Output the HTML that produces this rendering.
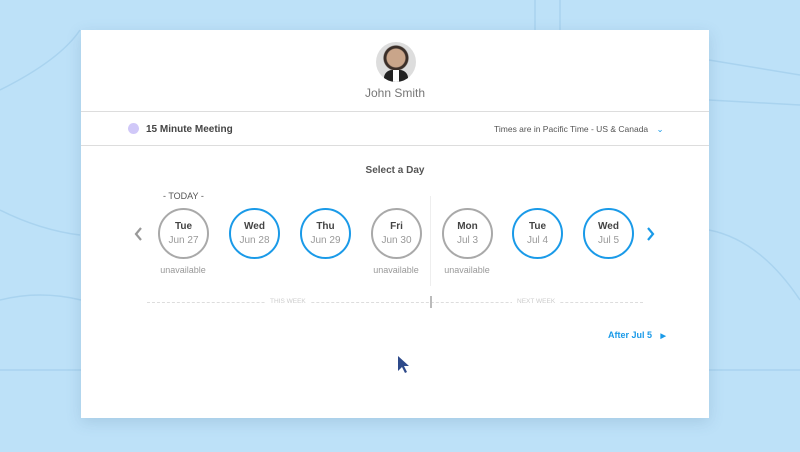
<!DOCTYPE html>
<html><head><style>
body{margin:0;width:800px;height:452px;background:#bde1f8;position:relative;overflow:hidden;font-family:"Liberation Sans",sans-serif}
.card{position:absolute;left:81px;top:30px;width:628px;height:388px;background:#fff;box-shadow:0 4px 14px rgba(60,100,140,.18)}
.abs{position:absolute}
.c{position:absolute;width:47px;height:47px;border-radius:50%;border:2px solid #a9a9a9;top:208px;text-align:center;box-sizing:content-box}
.c.b{border-color:#1a9ae8}
.c .d{font-size:10px;color:#444;font-weight:bold;margin-top:11px}
.c .m{font-size:10px;color:#999;margin-top:3px}
.u{position:absolute;top:265px;font-size:9px;color:#999;width:80px;text-align:center}
</style></head><body>
<svg class="abs" style="left:0;top:0" width="800" height="452">
<g fill="none" stroke="#a9d3ef" stroke-width="1.5">
<path d="M0 90 Q60 60 80 30"/><path d="M0 210 Q40 230 80 235"/>
<path d="M535 0 V30"/><path d="M560 0 V30"/><path d="M709 60 L800 75"/><path d="M709 100 L800 105"/>
<path d="M709 230 Q760 240 800 300"/><path d="M0 370 H81"/><path d="M709 370 H800"/><path d="M0 300 Q40 290 81 300"/>
</g></svg>
<div class="card">
<div class="abs" style="left:295px;top:12px;width:40px;height:40px;border-radius:50%;background:radial-gradient(circle at 50% 40%,#c9a58a 0 9px,#3a2e28 10px 12px,#ddd 13px);overflow:hidden">
<div class="abs" style="left:8px;top:28px;width:24px;height:14px;background:#222;border-radius:8px 8px 0 0"></div>
<div class="abs" style="left:17px;top:28px;width:6px;height:12px;background:#fff"></div></div>
<div class="abs" style="left:0;width:628px;top:56px;text-align:center;font-size:12px;color:#777">John Smith</div>
<div class="abs" style="left:0;top:81px;width:628px;height:1px;background:#ddd"></div>
<div class="abs" style="left:47px;top:93px;width:11px;height:11px;border-radius:50%;background:#d0c8f8"></div>
<div class="abs" style="left:65px;top:94px;font-size:10px;color:#444;font-weight:bold">15 Minute Meeting</div>
<div class="abs" style="left:413px;top:94px;font-size:8.5px;color:#555">Times are in Pacific Time - US &amp; Canada <span style="color:#1a9ae8;margin-left:6px">⌄</span></div>
<div class="abs" style="left:0;top:115px;width:628px;height:1px;background:#ddd"></div>
<div class="abs" style="left:0;width:628px;top:135px;text-align:center;font-size:10px;color:#555;font-weight:bold">Select a Day</div>
<div class="abs" style="left:82px;top:161px;font-size:9px;color:#555">- TODAY -</div>
<div class="abs" style="left:349px;top:166px;width:1px;height:90px;background:#eee"></div>
<svg class="abs" style="left:50px;top:195px" width="14" height="18"><path d="M10 3 L5 9 L10 15" fill="none" stroke="#999" stroke-width="2.2"/></svg>
<svg class="abs" style="left:563px;top:195px" width="14" height="18"><path d="M4 3 L9 9 L4 15" fill="none" stroke="#1a9ae8" stroke-width="2.2"/></svg>
</div>
<div class="c" style="left:158px"><div class="d">Tue</div><div class="m">Jun 27</div></div>
<div class="c b" style="left:229px"><div class="d">Wed</div><div class="m">Jun 28</div></div>
<div class="c b" style="left:300px"><div class="d">Thu</div><div class="m">Jun 29</div></div>
<div class="c" style="left:371px"><div class="d">Fri</div><div class="m">Jun 30</div></div>
<div class="c" style="left:442px"><div class="d">Mon</div><div class="m">Jul 3</div></div>
<div class="c b" style="left:512px"><div class="d">Tue</div><div class="m">Jul 4</div></div>
<div class="c b" style="left:583px"><div class="d">Wed</div><div class="m">Jul 5</div></div>
<div class="u" style="left:143px">unavailable</div>
<div class="u" style="left:356px">unavailable</div>
<div class="u" style="left:427px">unavailable</div>
<div class="abs" style="left:147px;top:302px;width:496px;border-top:1px dashed #ddd"></div>
<div class="abs" style="left:265px;top:298px;background:#fff;padding:0 5px;font-size:6.5px;color:#ccc">THIS WEEK</div>
<div class="abs" style="left:512px;top:298px;background:#fff;padding:0 5px;font-size:6.5px;color:#ccc">NEXT WEEK</div>
<div class="abs" style="left:430px;top:296px;width:2px;height:12px;background:#bbb"></div>
<div class="abs" style="left:608px;top:330px;font-size:9px;color:#1a9ae8;font-weight:bold">After Jul 5 <span style="margin-left:6px;font-size:7px">▶</span></div>
<svg class="abs" style="left:396px;top:355px" width="16" height="20"><path d="M2 1 L2 16 L6 12 L9 18 L11 17 L8 11 L13 11 Z" fill="#2e4a8a"/></svg>
</body></html>
